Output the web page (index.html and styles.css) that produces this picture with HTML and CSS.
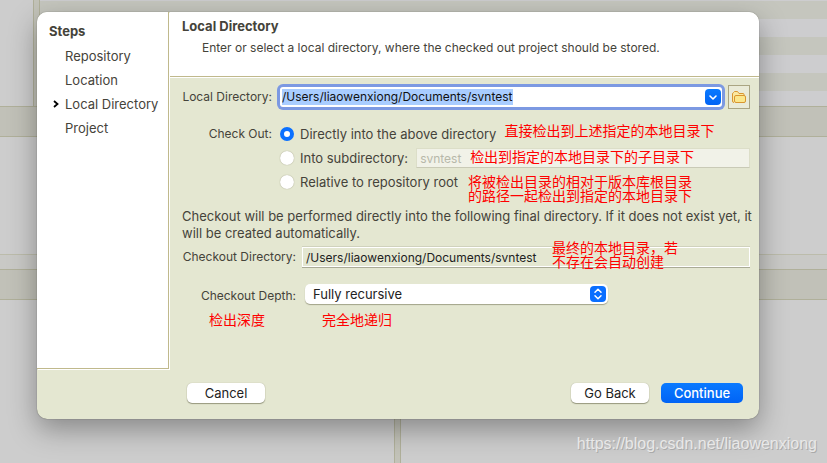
FILE: index.html
```html
<!DOCTYPE html>
<html lang="en">
<head>
    <meta charset="UTF-8">
    <title>Checkout</title>
    <link rel="stylesheet" href="styles.css">
    <script>
        window.onload = function() {
            document.getElementById('localDir').select();
        }
    </script>
</head>
<body>

    <!-- dimmed window behind the dialog -->
    <div class="backdrop">
        <div class="panes">
            <div class="pane"></div>
            <div class="stripes"></div>
        </div>
        <div class="bar"></div>
        <div class="blank"></div>
        <div class="strip"></div>
        <div class="bar"></div>
        <div class="panes bottom">
            <div class="pane"></div>
            <div class="pane"></div>
        </div>
    </div>

    <form class="dialog">
        <div class="top">
            <nav class="steps">
                <h2>Steps</h2>
                <ol>
                    <li>Repository</li>
                    <li>Location</li>
                    <li class="current">
                        <svg width="6" height="8" viewBox="0 0 6 8"><path d="M1 1l3.500 3L1 7" fill="none" stroke="#000" stroke-width="1.8"/></svg>
                        Local Directory
                    </li>
                    <li>Project</li>
                </ol>
            </nav>
            <main>
                <header>
                    <h1>Local Directory</h1>
                    <p>Enter or select a local directory, where the checked out project should be stored.</p>
                </header>
                <div class="content">
                    <div class="row dir">
                        <label class="name" for="localDir">Local Directory:</label>
                        <div class="combo">
                            <input type="text" id="localDir" value="/Users/liaowenxiong/Documents/svntest" spellcheck="false">
                            <button type="button" class="drop" aria-label="Show recent">
                                <svg width="16" height="16" viewBox="0 0 16 16"><path d="M5 7l3 3 3-3" fill="none" stroke="#fff" stroke-width="1.6" stroke-linecap="round" stroke-linejoin="round"/></svg>
                            </button>
                        </div>
                        <button type="button" class="browse" aria-label="Browse">
                            <svg width="16" height="14" viewBox="0 0 16 14">
                                <path d="M3 12.500q-1.500 0-1.500-1.500V4q0-1 1-1.500l1-1h3l1.500 2h4q1 0 1 1v1.500" fill="#fbe9a0" stroke="#d9962f"/>
                                <rect x="3.500" y="5.500" width="11" height="7" rx="1.500" fill="#fbe78c" stroke="#d9962f"/>
                            </svg>
                        </button>
                    </div>

                    <div class="row options" role="radiogroup" aria-labelledby="checkOut">
                        <span class="name" id="checkOut">Check Out:</span>
                        <div class="choices">
                            <div class="choice">
                                <input type="radio" name="target" id="direct" checked>
                                <label for="direct">Directly into the above directory</label>
                                <span class="note">直接检出到上述指定的本地目录下</span>
                            </div>
                            <div class="choice">
                                <input type="radio" name="target" id="sub">
                                <label for="sub">Into subdirectory:</label>
                                <div class="subdir">
                                    <input type="text" value="svntest" aria-label="Subdirectory" disabled>
                                    <span class="note over-sub">检出到指定的本地目录下的子目录下</span>
                                </div>
                            </div>
                            <div class="choice">
                                <input type="radio" name="target" id="relative">
                                <label for="relative">Relative to repository root</label>
                                <span class="note over-root">将被检出目录的相对于版本库根目录<br>的路径一起检出到指定的本地目录下</span>
                            </div>
                        </div>
                    </div>

                    <p class="info">Checkout will be performed directly into the following final directory. If it does not exist yet, it will be created automatically.</p>

                    <div class="row final">
                        <label class="name wide" for="finalDir">Checkout Directory:</label>
                        <div class="readonly">
                            <input type="text" id="finalDir" value="/Users/liaowenxiong/Documents/svntest" readonly>
                            <span class="note over-final">最终的本地目录，若<br>不存在会自动创建</span>
                        </div>
                    </div>

                    <div class="row depth">
                        <label class="name wide" for="depth">Checkout Depth:</label>
                        <div class="popup">
                            <select id="depth">
                                <option>Fully recursive</option>
                            </select>
                            <svg width="16" height="16" viewBox="0 0 16 16"><rect width="16" height="16" rx="4" fill="#0a6fff"/><path d="M5 6.300l3-3 3 3M5 9.700l3 3 3-3" fill="none" stroke="#fff" stroke-width="1.500" stroke-linecap="round" stroke-linejoin="round"/></svg>
                        </div>
                    </div>
                    <div class="notes">
                        <span class="note">检出深度</span>
                        <span class="note">完全地递归</span>
                    </div>
                </div>
            </main>
        </div>
        <footer>
            <button type="button">Cancel</button>
            <div class="right">
                <button type="button">Go Back</button>
                <button type="button" class="primary">Continue</button>
            </div>
        </footer>
    </form>

    <div class="watermark">https://blog.csdn.net/liaowenxiong</div>

</body>
</html>
```
FILE: styles.css
```css
* {
    box-sizing: border-box;
    margin: 0;
    padding: 0;
}
body {
    position: relative;
    min-height: 100vh;
    padding: 12px 68px 44px 37px;
    overflow: hidden;
    background: #cdcdcd;
    color: #45433a;
    font: 13px/16px Inter, "Noto Sans CJK SC", sans-serif;
}
input, select, button {
    font: inherit;
    border: none;
    outline: none;
}

/* backdrop */
.backdrop {
    position: absolute;
    inset: 0;
    display: grid;
    grid-template-rows: 106px 31px 117px 15px 31px 1fr;
}
.panes {
    display: grid;
    grid-template-columns: 34px 1fr;
    background: #c3c3b9;
}
.pane {
    border-right: 1px solid #b0b09a;
    background: #cdcdcd;
}
.stripes {
    margin-left: 5px;
    border-left: 1px solid #b0b09a;
    background: repeating-linear-gradient(#c5c6be 0 18px, #cdcdcf 18px 36px) 0 1px;
}
.panes.bottom {
    grid-template-columns: 395px 1fr;
    gap: 5px;
}
.bottom .pane + .pane {
    border-left: 1px solid #b0b09a;
    border-right: none;
}
.bar {
    border-top: 1px solid #b0b09a;
    border-bottom: 1px solid #b0b09a;
    background: #c1c1b8;
}
.strip {
    border-top: 1px solid #bcbcab;
    background: #c9c9c6;
}

/* dialog */
.dialog {
    position: relative;
    border-radius: 10px;
    background: #e4e7d1;
    box-shadow: 0 0 1px rgba(0, 0, 0, .6), 0 10px 28px rgba(0, 0, 0, .34);
}
.top {
    display: flex;
    gap: 1px;
    min-height: 357px;
}
.steps {
    flex: none;
    width: 132px;
    padding: 11px 0 0 12px;
    border-right: 1px solid #c0b98c;
    border-bottom: 1px solid #c0b98c;
    border-radius: 10px 0 0 0;
    background: #fff;
    box-shadow: 1px 1px #fff;
}
.steps h2, header h1 {
    font-size: 13px;
    font-weight: 700;
    line-height: 17px;
}
.steps ol {
    padding-top: 4px;
    list-style: none;
}
.steps li {
    padding-left: 16px;
    line-height: 24px;
    white-space: nowrap;
}
.steps .current {
    display: flex;
    align-items: center;
    gap: 6px;
    padding-left: 4px;
}
main {
    flex: 1;
    min-width: 0;
}
header {
    height: 65px;
    padding: 6px 12px;
    border-bottom: 1px solid #c0b98c;
    border-radius: 0 10px 0 0;
    background: #fff;
    box-shadow: 0 1px #fff;
}
header p {
    padding: 5px 0 0 20px;
    font-size: 12px;
    white-space: nowrap;
}
.content {
    padding: 7px 9px 0 12px;
}
.row {
    display: flex;
    align-items: center;
}
.name {
    flex: none;
    width: 90px;
    font-size: 12px;
    text-align: right;
    white-space: nowrap;
}
.name.wide {
    width: 114px;
}
.dir {
    height: 26px;
}
.combo {
    flex: 1;
    display: flex;
    align-items: center;
    height: 20px;
    margin: 0 6px 0 8px;
    padding: 0 1px 0 2px;
    border-radius: 3px;
    background: #fff;
    box-shadow: 0 0 0 3px #7c99e2;
}
.combo input {
    flex: 1;
    min-width: 0;
    height: 16px;
    background: none;
    color: #111;
    font-size: 12px;
}
.combo input::selection {
    background: #a9cdff;
    color: #111;
}
.drop {
    width: 16px;
    height: 16px;
    border-radius: 4px;
    background: linear-gradient(#0a7aff, #0063f5);
}
.drop svg {
    display: block;
}
.browse {
    display: grid;
    place-items: center;
    width: 22px;
    height: 24px;
    border: 1px solid #aaa582;
    background: #eaebd8;
}
.options {
    align-items: flex-start;
    padding-top: 12px;
}
.options .name {
    line-height: 24px;
}
.choices {
    flex: 1;
}
.choice {
    position: relative;
    display: flex;
    align-items: center;
    height: 24px;
    padding-left: 8px;
    white-space: nowrap;
}
.choice label {
    padding-left: 6px;
}
.choice input[type=radio] {
    appearance: none;
    width: 14px;
    height: 14px;
    border-radius: 50%;
    background: #fff;
    box-shadow: 0 0 1px #8d8b6a;
}
.choice input[type=radio]:checked {
    border: 4px solid #0a70ff;
    box-shadow: none;
}
.subdir {
    position: relative;
    flex: 1;
    margin-left: 8px;
}
.subdir input {
    display: block;
    width: 100%;
    height: 20px;
    padding-left: 3px;
    border: 1px solid #dcdec8;
    border-bottom-color: #c9cab6;
    background: #f1f2e8;
    color: #b7b8aa;
    font-size: 12px;
}

/* red remarks */
.note {
    color: #f00;
    font: 14px/14px "Noto Sans CJK SC", sans-serif;
    white-space: nowrap;
}
.choice > .note {
    margin: -8px 0 0 8px;
}
.over-sub {
    position: absolute;
    top: 1px;
    left: 54px;
}
.choice > .over-root {
    position: absolute;
    top: 4px;
    left: 196px;
    margin: 0;
}
.over-final {
    position: absolute;
    top: -7px;
    left: 250px;
}
.info {
    margin-right: -9px;
    padding-top: 14px;
    line-height: 17px;
}
.final {
    padding-top: 5px;
}
.readonly {
    position: relative;
    flex: 1;
    margin-left: 6px;
}
.readonly input {
    display: block;
    width: 100%;
    height: 20px;
    padding-left: 3px;
    border: 1px solid #fff;
    background: none;
    box-shadow: 0 1px #aaab96, 0 -1px #d0d2bd;
    color: #222;
    font-size: 12px;
}
.depth {
    padding-top: 17px;
}
.depth .name {
    padding-top: 3px;
}
.popup {
    position: relative;
    width: 303px;
    margin-left: 9px;
}
.popup select {
    display: block;
    appearance: none;
    width: 100%;
    height: 20px;
    padding-left: 8px;
    border-radius: 5px;
    background: #fff;
    box-shadow: 0 1px 1px rgba(80, 80, 50, .45);
    color: #222;
}
.popup svg {
    position: absolute;
    top: 2px;
    right: 2px;
    pointer-events: none;
}
.notes {
    display: flex;
    gap: 57px;
    padding: 8px 0 0 27px;
}

footer {
    display: flex;
    justify-content: space-between;
    padding: 14px 16px 16px 150px;
}
footer button {
    width: 78px;
    height: 20px;
    border-radius: 5px;
    background: #fff;
    box-shadow: 0 1px 1px rgba(80, 80, 50, .5), 0 0 1px rgba(80, 80, 50, .4);
    color: #222;
}
.right {
    display: flex;
    gap: 12px;
}
footer .primary {
    width: 82px;
    background: linear-gradient(#0a7aff, #0063f5);
    color: #fff;
    font-weight: 500;
    box-shadow: none;
}
.watermark {
    position: absolute;
    right: 10px;
    bottom: 9px;
    color: #e8e8e8;
    font: 16px/20px "Liberation Sans", sans-serif;
    text-shadow: 1px 1px #aaa;
}
```
